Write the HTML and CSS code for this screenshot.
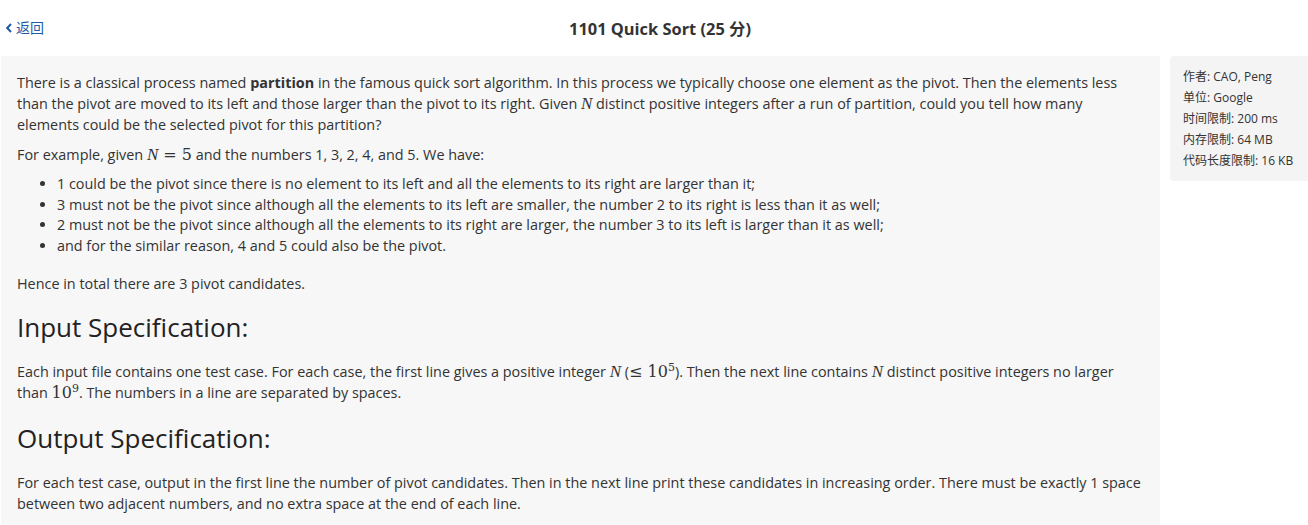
FILE: index.html
```html
<!DOCTYPE html>
<html lang="en">
<head>
<meta charset="utf-8">
<title>1101 Quick Sort</title>
<link rel="stylesheet" href="styles.css">
</head>
<body>
<header class="topbar">
  <a class="back" href="#"><svg class="chev" width="8" height="10" viewBox="0 0 8 10"><path d="M6 1 L2.2 5 L6 9" fill="none" stroke="currentColor" stroke-width="2"/></svg>返回</a>
  <h1 class="title">1101 Quick Sort (25 分)</h1>
</header>
<div class="layout">
  <main class="problem">
    <p>There is a classical process named <b>partition</b> in the famous quick sort algorithm. In this process we typically choose one element as the pivot. Then the elements less than the pivot are moved to its left and those larger than the pivot to its right. Given <span class="m"><i>N</i></span> distinct positive integers after a run of partition, could you tell how many elements could be the selected pivot for this partition?</p>
    <p>For example, given <span class="m"><i>N</i> = 5</span> and the numbers 1, 3, 2, 4, and 5. We have:</p>
    <ul>
      <li>1 could be the pivot since there is no element to its left and all the elements to its right are larger than it;</li>
      <li>3 must not be the pivot since although all the elements to its left are smaller, the number 2 to its right is less than it as well;</li>
      <li>2 must not be the pivot since although all the elements to its right are larger, the number 3 to its left is larger than it as well;</li>
      <li>and for the similar reason, 4 and 5 could also be the pivot.</li>
    </ul>
    <p class="after-list">Hence in total there are 3 pivot candidates.</p>
    <h2>Input Specification:</h2>
    <p class="spec">Each input file contains one test case. For each case, the first line gives a positive integer <span class="m"><i>N</i></span> (<span class="m">≤ 10<sup>5</sup></span>). Then the next line contains <span class="m"><i>N</i></span> distinct positive integers no larger than <span class="m">10<sup>9</sup></span>. The numbers in a line are separated by spaces.</p>
    <h2 class="out">Output Specification:</h2>
    <p>For each test case, output in the first line the number of pivot candidates. Then in the next line print these candidates in increasing order. There must be exactly 1 space between two adjacent numbers, and no extra space at the end of each line.</p>
  </main>
  <aside class="info">
    <div>作者: CAO, Peng</div>
    <div>单位: Google</div>
    <div>时间限制: 200 ms</div>
    <div>内存限制: 64 MB</div>
    <div>代码长度限制: 16 KB</div>
  </aside>
</div>
</body>
</html>
```

FILE: styles.css
```css
html, body {
  margin: 0;
  padding: 0;
  background: #fff;
  overflow: hidden;
}
body {
  font-family: "Open Sans", "Noto Sans CJK SC", sans-serif;
  color: #333;
  font-size: 14px;
}
.topbar {
  height: 56px;
  display: flex;
  align-items: center;
  justify-content: center;
  position: relative;
}
.back {
  position: absolute;
  left: 5px;
  top: 18px;
  color: #1f5aa6;
  text-decoration: none;
  font-size: 14px;
  line-height: 20px;
  display: flex;
  align-items: center;
  gap: 3px;
}
.title {
  margin: -1px 0 0 12px;
  font-size: 16.4px;
  font-weight: 700;
  color: #333;
}
.layout {
  display: flex;
  gap: 10px;
  padding-left: 1px;
  align-items: flex-start;
}
.problem {
  flex: 0 0 1159px;
  box-sizing: border-box;
  background: #f7f7f7;
  padding: 16px 16px 20px 16px;
  line-height: 21px;
  font-size: 14.4px;
  min-height: 469px;
}
.problem p {
  margin: 0 0 9px;
}
.problem ul {
  margin: 0 0 16px;
  padding-left: 40px;
}
.problem li {
  line-height: 20.7px;
}
.problem h2 {
  font-size: 26px;
  font-weight: 400;
  margin: 16px 0 17px;
  line-height: 34px;
  color: #222;
}
.problem h2.out {
  margin-top: 18px;
}
.m {
  font-family: "DejaVu Serif", "Liberation Serif", serif;
  font-size: 16px;
  line-height: 1;
}
.m i {
  font-family: "Liberation Serif", serif;
  font-size: 17px;
}
.m sup {
  font-size: 11px;
  line-height: 0;
}
.info {
  flex: 0 0 150px;
  background: #f4f4f4;
  border-radius: 4px;
  padding: 10px 13px 10px;
  font-size: 12px;
  line-height: 21px;
  color: #333;
}
```
